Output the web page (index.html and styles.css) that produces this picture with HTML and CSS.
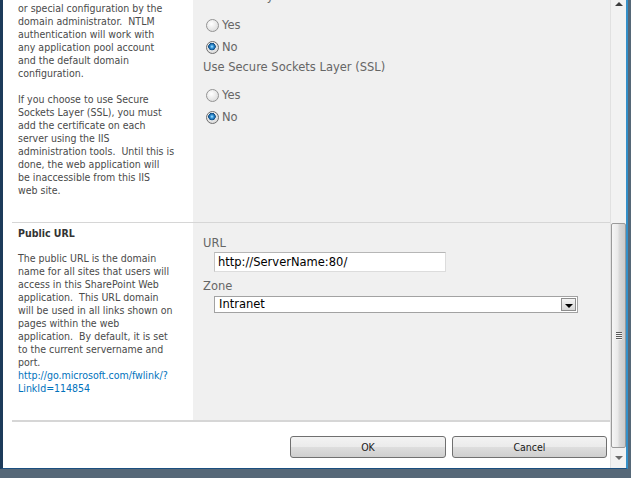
FILE: index.html
```html
<!DOCTYPE html>
<html lang="en">
<head>
    <meta charset="UTF-8">
    <title>Create New Web Application</title>
    <link rel="stylesheet" href="styles.css">
</head>
<body>
    <div class="dialog">
        <div class="pane">
            <div class="section section-security">
                <div class="desc">
                    <p>or special configuration by the<br>domain administrator.&nbsp; NTLM<br>authentication will work with<br>any application pool account<br>and the default domain<br>configuration.</p>
                    <p>If you choose to use Secure<br>Sockets Layer (SSL), you must<br>add the certificate on each<br>server using the IIS<br>administration tools.&nbsp; Until this is<br>done, the web application will<br>be inaccessible from this IIS<br>web site.</p>
                </div>
                <div class="fields">
                    <div class="field-label clipped">Allow Anonymous</div>
                    <div class="radio-list">
                        <label class="radio"><input type="radio" name="anon"> Yes</label>
                        <label class="radio"><input type="radio" name="anon" checked> No</label>
                    </div>
                    <div class="field-label ssl-label">Use Secure Sockets Layer (SSL)</div>
                    <div class="radio-list ssl-list">
                        <label class="radio"><input type="radio" name="ssl"> Yes</label>
                        <label class="radio"><input type="radio" name="ssl" checked> No</label>
                    </div>
                </div>
            </div>
            <div class="section section-url">
                <div class="desc">
                    <h3>Public URL</h3>
                    <p>The public URL is the domain<br>name for all sites that users will<br>access in this SharePoint Web<br>application.&nbsp; This URL domain<br>will be used in all links shown on<br>pages within the web<br>application.&nbsp; By default, it is set<br>to the current servername and<br>port.<br><a href="#">http://go.microsoft.com/fwlink/?<br>LinkId=114854</a></p>
                </div>
                <div class="fields">
                    <div class="field-label">URL</div>
                    <input class="text-input" type="text" value="http://ServerName:80/">
                    <div class="field-label zone-label">Zone</div>
                    <div class="combo">
                        <span class="combo-value">Intranet</span>
                        <span class="combo-btn"></span>
                    </div>
                </div>
            </div>
            <div class="footer">
                <button class="btn">OK</button>
                <button class="btn">Cancel</button>
            </div>
        </div>
        <div class="scrollbar">
            <div class="sb-up"></div>
            <div class="sb-track"></div>
            <div class="sb-thumb"><span class="sb-grip"></span></div>
            <div class="sb-down"></div>
        </div>
    </div>
</body>
</html>
```

FILE: styles.css
```css
body {
    margin: 0;
    background: #566878;
    font-family: "DejaVu Sans Condensed", "DejaVu Sans", sans-serif;
}

.dialog {
    display: flex;
    width: 623px;
    height: 468px;
    background: white;
    border-left: 3px solid #1d3b5a;
    border-right: 2px solid #3490c9;
    border-bottom: 1px solid #1b4f80;
}

.pane {
    flex: 1;
    overflow: hidden;
    padding-left: 9px;
}

.section {
    display: flex;
    border-bottom: 1px solid #d6d6d6;
}

.section-url {
    border-bottom-width: 2px;
}

/* left column, description text */
.desc {
    width: 181px;
    box-sizing: border-box;
    padding: 2px 4px 25px 6px;
    font-size: 10.5px;
    line-height: 13px;
    color: #4a4a4a;
}

.desc p {
    margin: 0 0 13px;
}

.desc p:last-child {
    margin-bottom: 0;
}

.section-url .desc {
    padding-top: 4px;
}

.desc h3 {
    margin: 0 0 12px;
    font-size: 10.5px;
    line-height: 13px;
    color: #333;
}

.desc a {
    color: #0072bc;
    text-decoration: none;
}

/* right column, controls */
.fields {
    flex: 1;
    background: #f0f0f0;
    padding-left: 10px;
    font-family: "DejaVu Sans", Verdana, sans-serif;
    font-size: 11.5px;
    color: #666;
}

.field-label {
    line-height: 16px;
    height: 16px;
}

.field-label.clipped {
    margin-top: -12px;
}

.ssl-label {
    margin-top: 1px;
}

.section-url .fields {
    padding-top: 12px;
}

.radio-list {
    margin-top: 10px;
}

.ssl-list {
    margin-top: 9px;
}

.radio {
    display: flex;
    align-items: center;
    gap: 3px;
    height: 22px;
    padding-left: 3px;
}

.radio input {
    appearance: none;
    -webkit-appearance: none;
    margin: 0;
    width: 13px;
    height: 13px;
    border: 1px solid #939393;
    border-radius: 50%;
    box-sizing: border-box;
    background: radial-gradient(circle at 40% 35%, #ffffff, #d4d4d4);
}

.radio input:checked {
    border-color: #6f6f6f;
    background:
        radial-gradient(circle at 45% 42%, #b9ecff 0, #3a9be0 1.5px, #0f4a80 3.5px, transparent 4px),
        radial-gradient(circle at 40% 35%, #ffffff, #cfcfcf);
}

.text-input {
    display: block;
    margin: 1px 0 0 11px;
    width: 232px;
    height: 20px;
    box-sizing: border-box;
    padding: 0 3px;
    border: 1px solid;
    border-color: #b6b6b6 #dcdcdc #dcdcdc #c4c4c4;
    font-family: "DejaVu Sans", Verdana, sans-serif;
    font-size: 11.5px;
    color: black;
    background: white;
}

.zone-label {
    margin-top: 6px;
}

.combo {
    display: flex;
    align-items: stretch;
    margin: 2px 0 0 11px;
    width: 364px;
    height: 17px;
    box-sizing: border-box;
    border: 1px solid #a2a2a2;
    background: white;
    padding: 1px;
}

.combo-value {
    flex: 1;
    padding-left: 3px;
    line-height: 13px;
    color: black;
}

.combo-btn {
    width: 15px;
    box-sizing: border-box;
    border: 1px solid #8d8d8d;
    background: linear-gradient(#f4f4f4, #d7d7d7);
    display: flex;
    align-items: center;
    justify-content: center;
}

.combo-btn::before {
    content: "";
    border-left: 4px solid transparent;
    border-right: 4px solid transparent;
    border-top: 4px solid #000;
    margin-top: 2px;
}

/* buttons row */
.footer {
    display: flex;
    justify-content: flex-end;
    gap: 6px;
    padding: 14px 3px 0 0;
}

.btn {
    width: 156px;
    height: 22px;
    border: 1px solid #707070;
    border-radius: 3px;
    background: linear-gradient(#f3f3f3 0%, #ebebeb 48%, #dddddd 52%, #cfcfcf 100%);
    font-family: "DejaVu Sans Condensed", "DejaVu Sans", sans-serif;
    font-size: 10.5px;
    color: #1a1a1a;
    padding: 0;
}

.btn + .btn {
    width: 155px;
}

/* fake scrollbar of the dialog frame */
.scrollbar {
    width: 16px;
    display: flex;
    flex-direction: column;
    background: #f2f2f2;
    border-left: 1px solid #e1e1e1;
    box-sizing: border-box;
}

.sb-up {
    height: 12px;
    display: flex;
    justify-content: center;
    padding-top: 2px;
    box-sizing: border-box;
}

.sb-up::before {
    content: "";
    height: 0;
    border-left: 4px solid transparent;
    border-right: 4px solid transparent;
    border-bottom: 4px solid #3c3c3c;
}

.sb-track {
    height: 211px;
}

.sb-thumb {
    height: 225px;
    box-sizing: border-box;
    border: 1px solid #9a9a9a;
    border-radius: 2px;
    background: linear-gradient(to right, #f6f6f6, #e9e9e9 45%, #dadada 55%, #cbcbcb);
    display: flex;
    align-items: center;
    justify-content: center;
}

.sb-grip {
    width: 6px;
    height: 8px;
    background: repeating-linear-gradient(#5a5a5a 0 1px, #f4f4f4 1px 2px);
}

.sb-down {
    flex: 1;
    display: flex;
    align-items: center;
    justify-content: center;
}

.sb-down::before {
    content: "";
    height: 0;
    border-left: 4px solid transparent;
    border-right: 4px solid transparent;
    border-top: 4px solid #6a6a6a;
}
```
